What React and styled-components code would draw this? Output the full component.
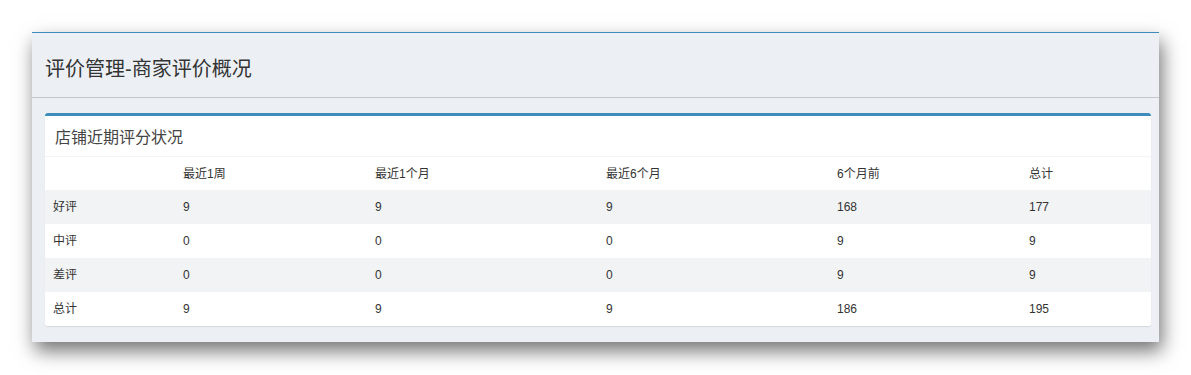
import React from "react";
import styled, { createGlobalStyle } from "styled-components";

const GlobalStyle = createGlobalStyle`
  html, body { margin: 0; padding: 0; background: #ffffff; }
  body {
    font-family: "Liberation Sans", Arial, "Noto Sans CJK SC", sans-serif;
    color: #333333;
  }
  *, *::before, *::after { box-sizing: border-box; }
`;

const Page = styled.div`
  padding: 32px 32px 33px 32px;
  width: 1191px;
  min-height: 375px;
`;

const Panel = styled.section`
  background: #ecf0f5;
  border-top: 1px solid #3c8dbc;
  box-shadow: 3px 9px 18px rgba(0, 0, 0, 0.55);
`;

const PanelHeader = styled.header`
  height: 65px;
  display: flex;
  align-items: center;
  padding: 4px 13px 0;
  border-bottom: 1px solid #c3c7cb;
`;

const PanelTitle = styled.h1`
  margin: 0;
  font-size: 20px;
  font-weight: normal;
  color: #333333;
  font-family: "Liberation Sans", Arial, "Noto Sans CJK SC", sans-serif;
`;

const PanelBody = styled.div`
  padding: 15px 8px 16px 13px;
`;

const Box = styled.div`
  background: #ffffff;
  border-top: 3px solid #3c8dbc;
  border-radius: 3px;
  box-shadow: 0 1px 1px rgba(0, 0, 0, 0.1);
  overflow: hidden;
`;

const BoxHeader = styled.div`
  height: 41px;
  display: flex;
  align-items: center;
  padding: 0 10px;
  border-bottom: 1px solid #f4f4f4;
`;

const BoxTitle = styled.h3`
  margin: 0;
  font-size: 16px;
  font-weight: normal;
  color: #444444;
`;

const Table = styled.table`
  width: 100%;
  border-collapse: collapse;
  table-layout: fixed;
  font-size: 12px;
`;

const Row = styled.tr`
  background: ${(p) => (p.$striped ? "#f2f3f5" : "#ffffff")};
`;

const Cell = styled.td`
  height: 34px;
  padding: 1px 8px 0;
  vertical-align: middle;
  text-align: left;
  color: #333333;
  font-weight: normal;
  line-height: 17px;
`;

const HeadCell = styled(Cell).attrs({ as: "th" })`
  height: 33px;
  padding-top: 2px;
`;

const widths = [130, 192, 231, 231, 192, 130];
const headers = ["", "最近1周", "最近1个月", "最近6个月", "6个月前", "总计"];
const rows = [
  ["好评", "9", "9", "9", "168", "177"],
  ["中评", "0", "0", "0", "9", "9"],
  ["差评", "0", "0", "0", "9", "9"],
  ["总计", "9", "9", "9", "186", "195"],
];

export default function App() {
  return (
    <>
      <GlobalStyle />
      <Page>
        <Panel>
          <PanelHeader>
            <PanelTitle>评价管理-商家评价概况</PanelTitle>
          </PanelHeader>
          <PanelBody>
            <Box>
              <BoxHeader>
                <BoxTitle>店铺近期评分状况</BoxTitle>
              </BoxHeader>
              <Table>
                <colgroup>
                  {widths.map((w, i) => (
                    <col key={i} style={{ width: w }} />
                  ))}
                </colgroup>
                <thead>
                  <Row>
                    {headers.map((h, i) => (
                      <HeadCell key={i}>{h}</HeadCell>
                    ))}
                  </Row>
                </thead>
                <tbody>
                  {rows.map((r, ri) => (
                    <Row key={ri} $striped={ri % 2 === 0}>
                      {r.map((c, ci) => (
                        <Cell key={ci}>{c}</Cell>
                      ))}
                    </Row>
                  ))}
                </tbody>
              </Table>
            </Box>
          </PanelBody>
        </Panel>
      </Page>
    </>
  );
}
